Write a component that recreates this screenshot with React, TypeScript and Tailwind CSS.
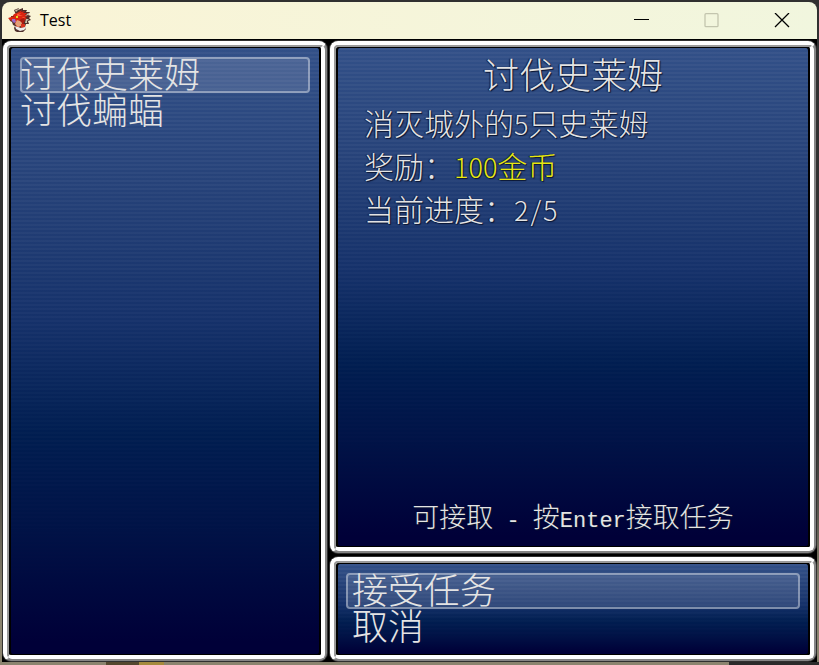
import { useState } from "react";
import type { ReactNode } from "react";

const quests = [
  {
    id: "slime",
    name: "讨伐史莱姆",
    target: { before: "消灭城外的", count: "5", after: "只史莱姆" },
    reward: { amount: "100", unit: "金币" },
    done: 2,
    total: 5,
  },
  {
    id: "bat",
    name: "讨伐蝙蝠",
    target: { before: "消灭洞穴的", count: "3", after: "只蝙蝠" },
    reward: { amount: "80", unit: "金币" },
    done: 0,
    total: 3,
  },
];

const commands = ["接受任务", "取消"];

function Frame({ className = "", children }: { className?: string; children: ReactNode }) {
  return (
    <section className={`flex rounded-[8px] border-t-4 border-l-4 border-r-2 border-b-2 border-t-white border-l-white border-r-[#858585] border-b-[#858585] bg-[#858585] shadow-[0_0_0_1px_#303030] ${className}`}>
      <div className="flex flex-1 rounded-[5px] border-t-2 border-l-2 border-r-4 border-b-4 border-t-[#9a9a9a] border-l-[#9a9a9a] border-r-white border-b-white bg-black">
        <div className="relative flex flex-1 flex-col rounded-[4px] border border-l-2 border-r-2 border-black bg-[linear-gradient(to_bottom,#325088_0%,#264279_22%,#15316a_45%,#001d50_64%,#001246_80%,#000038_98%)] overflow-hidden">
          {/* Scan lines */}
          <div className="absolute inset-0 bg-[repeating-linear-gradient(to_bottom,rgba(255,255,255,0.04)_0px,rgba(255,255,255,0.04)_2px,transparent_2px,transparent_4px)] mask-b-from-20% mask-b-to-90% pointer-events-none" />
          <div className="relative flex flex-1 flex-col">{children}</div>
        </div>
      </div>
    </section>
  );
}

function MenuItem({
  label,
  active,
  className = "",
  onClick,
}: {
  label: string;
  active: boolean;
  className?: string;
  onClick: () => void;
}) {
  return (
    <button
      type="button"
      onClick={onClick}
      className={`flex w-full h-9 items-start rounded-[4px] text-left text-[36px] leading-[30px] outline-none ${
        active ? "bg-white/12 shadow-[inset_0_0_0_2px_rgba(255,255,255,0.38)]" : ""
      } ${className}`}
    >
      {label}
    </button>
  );
}

function DragonIcon() {
  return (
    <svg viewBox="0 0 24 24" className="size-6" aria-hidden="true">
      <path d="M6 2l5-2-1 2 5-2v2h4l-1 2 4 0-2 3 3 1-2 2 2 2-3 1 1 3-3 0-1 3 1 2-3 3-4 1-4-2-1-3 1-2-2-1-1-3-2-1-1-3 4-1 3-2z" fill="#4f302b" />
      <path d="M6 6l3-1 5-3-1 2 4-1-2 2 4-0-2 2 3 1-3 1 2 2-3 1 0 3-3 2-3 3-2-2-1-4-3-1-2-1-2-2 4-1z" fill="#dc2410" />
      <path d="M7 2l4-1-2 2-1 1zM20 5l1 0-1 2-3 1zM18 11l3 0-2 2 0 2-2 0z" fill="#c4c1aa" />
      <path d="M9 6l4-1-2 2 4 0-3 1-3 0zM14 9l4 0-3 1z" fill="#fa5a35" />
      <path d="M13 11l3-1 1 3-2 3-3 0-1-3z" fill="#a81b10" />
      <path d="M3 8h3v1H3z" fill="#8d2317" />
      <path d="M8 8h2v2H8z" fill="#e8d829" />
      <path d="M4 11l3 0 1 3-2 1-2-2z" fill="#9a6dca" />
      <path d="M9 12l3 1 2 2-1 3-3 1-3-3z" fill="#e3a078" />
      <path d="M13 16l4 0 0 3-4 1z" fill="#d9341f" />
      <path d="M7 18l3 1 3 1 4-1 1 1-2 2-4 1-4-2z" fill="#efedeb" />
    </svg>
  );
}

function TitleBar() {
  return (
    <header className="flex h-[37px] items-center rounded-t-[8px] bg-linear-to-r from-[#faf4d6] to-[#f1f6de] text-black">
      <div className="flex flex-1 items-center gap-2 pb-0.5 pl-1.5">
        <DragonIcon />
        <h1 className="font-['Open_Sans',sans-serif] text-[16px] leading-6">Test</h1>
      </div>
      <button type="button" aria-label="最小化" className="flex h-full w-[70px] items-center justify-center">
        <svg width="16" height="16" stroke="currentColor"><path d="M0 6.5h15" /></svg>
      </button>
      <button type="button" aria-label="最大化" disabled className="flex h-full w-[70px] items-center justify-center text-[#c3c5ae]">
        <svg width="16" height="16" fill="none" stroke="currentColor" strokeWidth="1.3"><rect x="1" y="0.7" width="13" height="13" rx="1" /></svg>
      </button>
      <button type="button" aria-label="关闭" className="flex h-full w-[70px] items-center justify-center">
        <svg width="16" height="16" stroke="currentColor" strokeWidth="1.3"><path d="M1 0l14 14M15 0L1 14" /></svg>
      </button>
    </header>
  );
}

export default function App() {
  const [questId, setQuestId] = useState("slime");
  const [command, setCommand] = useState(commands[0]);
  const quest = quests.find((q) => q.id === questId) ?? quests[0];

  return (
    <div className="flex min-h-screen flex-col bg-linear-to-b from-[#303030] from-65% to-[#8b846f] to-90% px-[2px] pt-[2px]">
      <TitleBar />
      <main className="grid flex-1 grid-cols-[2fr_3fr] gap-[3px] bg-black px-px pt-[2px] pb-px font-['Noto_Sans_CJK_SC',sans-serif] font-light text-[#e4e4e4] [text-shadow:1px_1px_1px_#0a1430,-1px_0_1px_#0a1430]">
        <Frame>
          <nav aria-label="任务列表" className="px-[9px] pt-[9px]">
            {quests.map((q) => (
              <MenuItem
                key={q.id}
                label={q.name}
                active={q.id === questId}
                onClick={() => setQuestId(q.id)}
              />
            ))}
          </nav>
        </Frame>

        <div className="flex flex-col gap-1">
          <Frame className="flex-1">
            <h2 className="pt-[9px] text-center text-[36px] leading-[32px]">{quest.name}</h2>
            <div className="flex flex-col px-[26px] pt-3 text-[30px] leading-[43px]">
              <p>
                {quest.target.before}
                <span className="text-[27px] leading-none">{quest.target.count}</span>
                {quest.target.after}
              </p>
              <p>
                奖励：
                <span className="text-[#e8e810]">
                  <span className="text-[27px] leading-none">{quest.reward.amount}</span>
                  {quest.reward.unit}
                </span>
              </p>
              <p>
                当前进度：
                <span className="text-[27px] leading-none">
                  {quest.done}
                  <span className="mx-0.5">/</span>
                  {quest.total}
                </span>
              </p>
            </div>
            <p className="mt-auto pb-3 text-center text-[27px] leading-9">
              可接取<span className="font-['Liberation_Mono',monospace] text-[22px] leading-none"> - </span>按
              <span className="font-['Liberation_Mono',monospace] text-[22px] leading-none">Enter</span>接取任务
            </p>
          </Frame>

          <Frame>
            <nav aria-label="任务操作" className="px-2 py-[9px]">
              {commands.map((c) => (
                <MenuItem
                  key={c}
                  label={c}
                  active={c === command}
                  className="px-1.5"
                  onClick={() => setCommand(c)}
                />
              ))}
            </nav>
          </Frame>
        </div>
      </main>
      {/* Strip of the map below the game window */}
      <div className="-mx-[2px] flex h-[3px] bg-[#8b846f]">
        <div className="w-[13%]" />
        <div className="w-[4%] bg-[#54472e]" />
        <div className="w-[3%] bg-[#a58a3c]" />
        <div className="flex-1" />
        <div className="w-[11%] bg-[#2b2b2b]" />
      </div>
    </div>
  );
}
